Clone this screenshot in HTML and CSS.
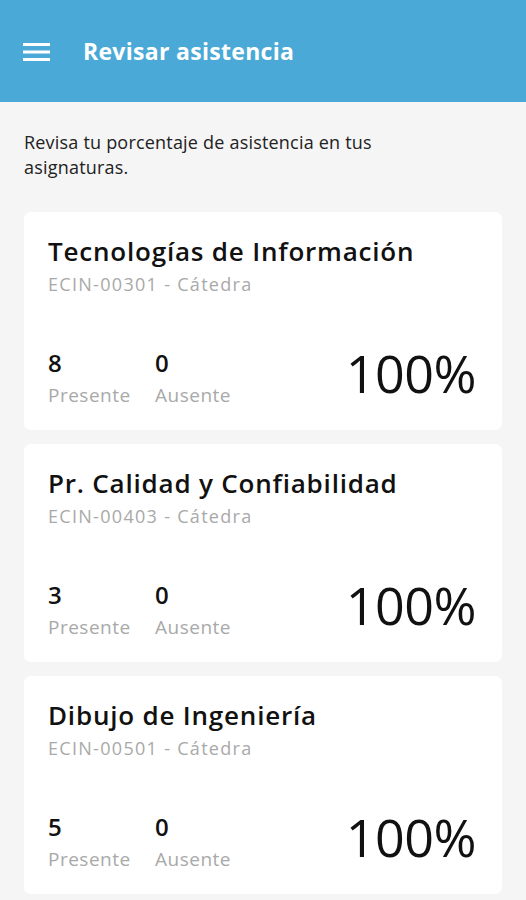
FILE: index.html
```html
<!DOCTYPE html>
<html lang="es">
<head>
<meta charset="utf-8">
<link rel="stylesheet" href="styles.css">
</head>
<body>
<header class="bar">
  <svg class="menu" width="27" height="20" viewBox="0 0 27 20"><rect x="0" y="1" width="27" height="3" fill="#fff"/><rect x="0" y="8.5" width="27" height="3" fill="#fff"/><rect x="0" y="16" width="27" height="3" fill="#fff"/></svg>
  <h1 class="title">Revisar asistencia</h1>
</header>
<main class="content">
  <p class="intro">Revisa tu porcentaje de asistencia en tus asignaturas.</p>
  <section class="card">
    <h2 class="name">Tecnologías de Información</h2>
    <div class="code">ECIN-00301 - Cátedra</div>
    <div class="stats">
      <div class="stat"><div class="num">8</div><div class="lbl">Presente</div></div>
      <div class="stat"><div class="num">0</div><div class="lbl">Ausente</div></div>
      <div class="pct">100%</div>
    </div>
  </section>
  <section class="card">
    <h2 class="name">Pr. Calidad y Confiabilidad</h2>
    <div class="code">ECIN-00403 - Cátedra</div>
    <div class="stats">
      <div class="stat"><div class="num">3</div><div class="lbl">Presente</div></div>
      <div class="stat"><div class="num">0</div><div class="lbl">Ausente</div></div>
      <div class="pct">100%</div>
    </div>
  </section>
  <section class="card">
    <h2 class="name">Dibujo de Ingeniería</h2>
    <div class="code">ECIN-00501 - Cátedra</div>
    <div class="stats">
      <div class="stat"><div class="num">5</div><div class="lbl">Presente</div></div>
      <div class="stat"><div class="num">0</div><div class="lbl">Ausente</div></div>
      <div class="pct">100%</div>
    </div>
  </section>
</main>
</body>
</html>
```
FILE: styles.css
```css
* { box-sizing: border-box; }
html, body { margin: 0; padding: 0; }
body {
  background: #f5f5f5;
  font-family: "Open Sans", "Noto Sans", sans-serif;
  color: #111;
  width: 526px;
  height: 900px;
  overflow: hidden;
}
.bar {
  height: 102px;
  background: #4aa9d6;
  display: flex;
  align-items: center;
  padding-left: 23px;
  gap: 33px;
}
.menu { display: block; margin-top: 2px; }
.title {
  margin: 0;
  color: #fff;
  font-size: 23px;
  font-weight: 700;
  letter-spacing: 0.3px;
}
.content {
  padding: 28px 24px 0;
  display: flex;
  flex-direction: column;
  gap: 14px;
}
.intro {
  max-width: 440px;
  margin: 0 0 18px;
  font-size: 18px;
  line-height: 25px;
  letter-spacing: 0.2px;
  color: #222;
}
.card {
  background: #fff;
  border-radius: 7px;
  height: 218px;
  padding: 23px 24px 0;
}
.name {
  margin: 0;
  font-size: 26px;
  font-weight: 600;
  line-height: 32px;
  letter-spacing: 0.8px;
  color: #111;
}
.code {
  margin-top: 5px;
  font-size: 18px;
  line-height: 24px;
  letter-spacing: 1.3px;
  color: #a9a9a9;
}
.stats {
  display: flex;
  align-items: flex-end;
  margin-top: 49px;
}
.stat { width: 107px; }
.num { font-size: 24px; font-weight: 600; line-height: 30px; color: #111; }
.lbl { margin-top: 4px; font-size: 19px; line-height: 26px; letter-spacing: 0.5px; color: #a9a9a9; }
.pct {
  margin-left: auto;
  font-size: 52px;
  line-height: 56px;
  letter-spacing: -0.5px;
  color: #111;
  margin-right: 2px;
  margin-bottom: 7px;
}
```
